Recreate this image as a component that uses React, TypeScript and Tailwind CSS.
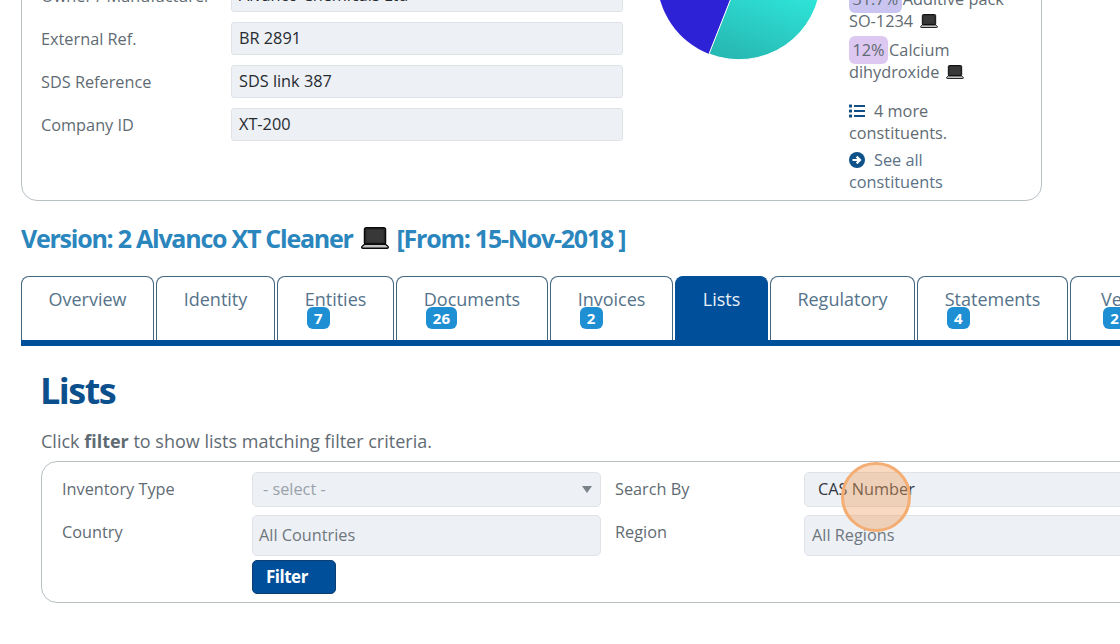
import React from "react";

function Laptop({ className }: { className: string }) {
  return (
    <svg viewBox="0 0 28 22" className={className} aria-hidden="true">
      <rect x="3.5" y="0.8" width="21" height="16.4" rx="1.8" fill="#2b2b2b" stroke="#0c0c0c" strokeWidth="1.5" />
      <rect x="5.5" y="2.8" width="17" height="12.4" fill="#383838" />
      <path d="M3.5 17.2h21l2.6 2.4c.5.7 0 1.6-.8 1.6H1.7c-.8 0-1.3-.9-.8-1.6z" fill="#c4c4c4" stroke="#0c0c0c" strokeWidth="1.4" />
    </svg>
  );
}

function Field({ label, value }: { label: string; value: string }) {
  return (
    <div className="flex items-center h-[33px]">
      <div className="w-[190px] flex-none text-[16.3px] text-[#5f6b73] mt-[1px]">{label}</div>
      <div className="w-[392px] flex-none h-[33px] bg-[#edf0f5] border border-[#dfe3e8] rounded-[3px] px-[7px] text-[16.3px] leading-[30px] text-[#262b30]">
        {value}
      </div>
    </div>
  );
}

const tabs: { label: string; w: string; badge?: string; active?: boolean }[] = [
  { label: "Overview", w: "w-[133px]" },
  { label: "Identity", w: "w-[119px]" },
  { label: "Entities", w: "w-[117px]", badge: "7" },
  { label: "Documents", w: "w-[152px]", badge: "26" },
  { label: "Invoices", w: "w-[123px]", badge: "2" },
  { label: "Lists", w: "w-[93px]", active: true },
  { label: "Regulatory", w: "w-[145px]" },
  { label: "Statements", w: "w-[151px]", badge: "4" },
  { label: "Versions", w: "w-[134px]", badge: "2" },
];

export default function App() {
  return (
    <div
      className="relative w-[1120px] h-[644px] overflow-hidden bg-white text-[#5f6b73]"
      style={{ fontFamily: '"Open Sans", "Noto Sans", sans-serif' }}
    >
      <div className="ml-[21px] mt-[-33px] w-[1021px] h-[234px] border border-[#b9c0c4] rounded-[16px] flex">
        <div className="pl-[19px] pt-[11px] flex flex-col gap-[10px] w-[602px] flex-none">
          <Field label="Owner / Manufacturer" value="Alvanco Chemicals Ltd" />
          <Field label="External Ref." value="BR 2891" />
          <Field label="SDS Reference" value="SDS link 387" />
          <Field label="Company ID" value="XT-200" />
        </div>
        <div className="w-[225px] flex-none">
          <svg viewBox="0 0 180 100" className="ml-[25px] w-[180px] h-[100px]">
            <defs>
              <linearGradient id="teal" x1="0.8" y1="0" x2="0.3" y2="1">
                <stop offset="0" stopColor="#30ecdf" />
                <stop offset="1" stopColor="#27b9b3" />
              </linearGradient>
            </defs>
            <path d="M90 10 L60 86 A82 82 0 0 1 8 10 Z" fill="#2d22d6" />
            <path d="M90 10 L172 10 A82 82 0 0 1 60 86 Z" fill="url(#teal)" stroke="#fff" strokeWidth="1" />
          </svg>
        </div>
        <div className="w-[175px] flex-none pt-[23px] text-[16.3px] leading-[22px]">
          <div className="mt-[-3px]">
            <span className="bg-[#c9c5f0] rounded-[6px] px-[3.5px] py-[3px] mr-[1px]">31.7%</span>
            Additive pack SO-1234
            <Laptop className="inline-block w-[18px] h-[14px] ml-[7px] align-[-1px]" />
          </div>
          <div className="mt-[7px]">
            <span className="bg-[#dcc8f0] rounded-[6px] px-[3.5px] py-[3px] mr-[1px]">12%</span>
            Calcium dihydroxide
            <Laptop className="inline-block w-[18px] h-[14px] ml-[7px] align-[-1px]" />
          </div>
          <div className="mt-[17px]">
            <svg viewBox="0 0 16 14" className="inline-block w-[16px] h-[14px] mr-[9px] align-[-1px]" aria-hidden="true">
              <g fill="#114f84">
                <rect x="0" y="0.5" width="3" height="3" rx="0.6" />
                <rect x="0" y="5.5" width="3" height="3" rx="0.6" />
                <rect x="0" y="10.5" width="3" height="3" rx="0.6" />
                <rect x="5" y="1" width="11" height="2" />
                <rect x="5" y="6" width="11" height="2" />
                <rect x="5" y="11" width="11" height="2" />
              </g>
            </svg>
            4 more constituents.
          </div>
          <div className="mt-[5px] text-[#5b7287]">
            <svg viewBox="0 0 16 16" className="inline-block w-[16px] h-[16px] mr-[9px] align-[-2px]" aria-hidden="true">
              <circle cx="8" cy="8" r="8" fill="#0f5189" />
              <path d="M3.5 8h7M7.6 4.6 11 8l-3.4 3.4" fill="none" stroke="#fff" strokeWidth="2.2" />
            </svg>
            See all
            <br />
            constituents
          </div>
        </div>
      </div>

      <h2 className="ml-[21px] mt-[19px] text-[25px] leading-[36px] font-bold tracking-[-1.25px] text-[#2a86bd] flex items-center whitespace-nowrap">
        <span>Version: 2 Alvanco XT Cleaner</span>
        <Laptop className="w-[28px] h-[22px] ml-[8px] mr-[8px]" />
        <span>[From: 15-Nov-2018 ]</span>
      </h2>

      <div className="ml-[21px] mt-[20px] w-[1200px] border-b-[6px] border-[#004f9a] flex gap-[2px] h-[70px]">
        {tabs.map((t) => (
          <div
            key={t.label}
            className={`${t.w} flex-none h-[64px] rounded-t-[8px] border border-b-0 pt-[10px] flex justify-center text-[18px] leading-[25px] ${
              t.active ? "bg-[#004f9a] border-[#004f9a] text-[#e8f0f8]" : "bg-white border-[#42667f] text-[#55738a]"
            }`}
          >
            <div>
              <div>{t.label}</div>
              {t.badge && (
                <span className="inline-block ml-[2px] mt-[-5px] align-top h-[22px] min-w-[23px] px-[7px] rounded-[6px] bg-[#1f8fd3] text-white text-[15px] leading-[22px] font-bold text-center">
                  {t.badge}
                </span>
              )}
            </div>
          </div>
        ))}
      </div>

      <h1 className="ml-[40px] mt-[24px] text-[36px] leading-[42px] font-bold tracking-[-1.5px] text-[#0b4f8c]">Lists</h1>
      <p className="ml-[41px] mt-[17px] text-[18px] leading-[24px] text-[#5f6b73]">
        Click <b className="font-bold">filter</b> to show lists matching filter criteria.
      </p>

      <div className="ml-[41px] mt-[8px] w-[1200px] h-[142px] border border-[#b9c0c4] rounded-[16px] pl-[20px] pt-[10px] flex flex-col">
        <div className="flex h-[34px] items-center text-[16.3px]">
          <div className="w-[190px] flex-none">Inventory Type</div>
          <div className="w-[349px] h-[35px] flex-none relative bg-[#edf0f5] border border-[#dfe3e8] rounded-[5px] px-[10px] leading-[32px] text-[#9aa2a9]">
            - select -
            <span className="absolute right-[8px] top-[13px] w-0 h-0 border-x-[5px] border-x-transparent border-t-[7px] border-t-[#7b8288]" />
          </div>
          <div className="w-[203px] pl-[14px] flex-none">Search By</div>
          <div className="flex-1 h-[35px] bg-[#edf0f5] border border-[#dfe3e8] rounded-[5px] px-[13px] leading-[32px] text-[#33383d]">
            CAS Number
          </div>
        </div>
        <div className="flex mt-[9px] h-[41px] text-[16.3px]">
          <div className="w-[190px] flex-none pt-[5px]">Country</div>
          <div className="w-[349px] h-[41px] flex-none bg-[#edf0f5] border border-[#dfe3e8] rounded-[5px] px-[6px] pt-[6px] leading-[26px] text-[#6f777e]">
            All Countries
          </div>
          <div className="w-[203px] pl-[14px] pt-[5px] flex-none">Region</div>
          <div className="flex-1 h-[41px] bg-[#edf0f5] border border-[#dfe3e8] rounded-[5px] px-[7px] pt-[6px] leading-[26px] text-[#6f777e]">
            All Regions
          </div>
        </div>
        <div className="ml-[190px] mt-[4px] w-[84px] h-[34px] bg-[#004f9a] border border-[#0a3f70] rounded-[5px] pl-[13px] text-[17px] leading-[32px] font-bold tracking-[-0.5px] text-white">
          Filter
        </div>
      </div>

      <div className="absolute left-[841px] top-[462px] w-[70px] h-[70px] rounded-full border-[3px] border-[#f4ad72] bg-[#f0a060]/40" />
    </div>
  );
}
